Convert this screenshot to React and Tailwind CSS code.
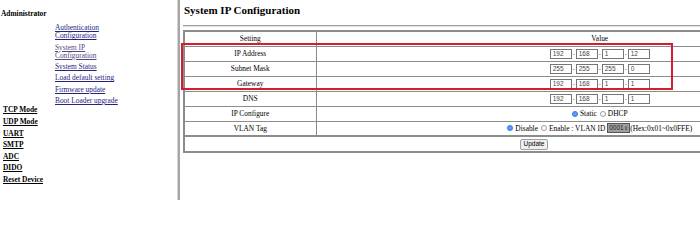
import { useState } from 'react'

const adminLinks = [
  { label: 'Authentication Configuration' },
  { label: 'System IP Configuration', visited: true },
  { label: 'System Status' },
  { label: 'Load default setting' },
  { label: 'Firmware update' },
  { label: 'Boot Loader upgrade' },
]

const sections = ['TCP Mode', 'UDP Mode', 'UART', 'SMTP', 'ADC', 'DIDO', 'Reset Device']

function IpInputs({ values }) {
  return (
    <div className="flex items-center justify-center">
      {values.map((v, i) => (
        <div key={i} className="flex items-center">
          {i > 0 && <span className="w-[4px] text-center text-[7px] leading-none">.</span>}
          <input
            defaultValue={v}
            className="w-[22px] h-[10px] border border-[#767676] bg-white px-[2px] text-[6.5px] text-[#444] leading-none font-['Liberation_Sans',sans-serif] outline-none"
          />
        </div>
      ))}
    </div>
  )
}

function Radio({ checked }) {
  return checked ? (
    <span className="inline-block w-[6px] h-[6px] rounded-full border-[1.5px] border-[#2f7fe6] bg-[#5a9cf0] mr-[2px]" />
  ) : (
    <span className="inline-block w-[6px] h-[6px] rounded-full border border-[#9a9a9a] bg-white mr-[2px]" />
  )
}

export default function App() {
  const [mode, setMode] = useState('static')
  const [vlan, setVlan] = useState('disable')

  const cell = 'border border-[#8c8c8c] h-[15px] p-0 text-center align-middle'

  return (
    <div className="flex w-[700px] h-[200px] bg-white overflow-hidden font-['Liberation_Serif',serif] text-black">
      {/* left menu frame */}
      <div className="w-[177px] shrink-0 pt-[8px] text-[7.4px]">
        <div className="pl-[1px] font-bold leading-[11px]">Administrator</div>
        <div className="pl-[55px] pt-[5px] w-[128px]">
          {adminLinks.map((l) => (
            <a
              key={l.label}
              href="#"
              className={`block underline leading-[8.3px] mb-[3px] ${
                l.visited ? 'text-[#54487e]' : 'text-[#24247e]'
              }`}
            >
              {l.label}
            </a>
          ))}
        </div>
        <div className="pl-[3px] -mt-[2px]">
          {sections.map((s) => (
            <a key={s} href="#" className="block font-bold underline leading-[8.3px] mb-[3.3px] text-black">
              {s}
            </a>
          ))}
        </div>
      </div>

      {/* frame border */}
      <div className="w-[3px] shrink-0 border-l border-[#d4d4d4] bg-[#a6a6a6]" />

      {/* content frame */}
      <div className="relative flex-1 overflow-hidden pl-[3px] pt-[3px]">
        <h2 className="pl-[1px] text-[11px] font-bold leading-[14px]">System IP Configuration</h2>
        <hr className="mt-[8px] border-t border-[#a0a0a0] border-b-[#e0e0e0] border-b" />

        <table className="mt-[3px] w-[702px] border-collapse border-2 border-[#8c8c8c] text-[7.4px] leading-none">
          <tbody>
            <tr>
              <td className={`${cell} w-[132px]`}>Setting</td>
              <td className={cell}>Value</td>
            </tr>
            <tr>
              <td className={cell}>IP Address</td>
              <td className={cell}><IpInputs values={['192', '168', '1', '12']} /></td>
            </tr>
            <tr>
              <td className={cell}>Subnet Mask</td>
              <td className={cell}><IpInputs values={['255', '255', '255', '0']} /></td>
            </tr>
            <tr>
              <td className={cell}>Gateway</td>
              <td className={cell}><IpInputs values={['192', '168', '1', '1']} /></td>
            </tr>
            <tr>
              <td className={cell}>DNS</td>
              <td className={cell}><IpInputs values={['192', '168', '1', '1']} /></td>
            </tr>
            <tr>
              <td className={cell}>IP Configure</td>
              <td className={cell}>
                <div className="flex items-center justify-center">
                  <label className="flex items-center mr-[3px]" onClick={() => setMode('static')}>
                    <Radio checked={mode === 'static'} />
                    Static
                  </label>
                  <label className="flex items-center" onClick={() => setMode('dhcp')}>
                    <Radio checked={mode === 'dhcp'} />
                    DHCP
                  </label>
                </div>
              </td>
            </tr>
            <tr>
              <td className={`${cell} border-b-2`}>VLAN Tag</td>
              <td className={`${cell} border-b-2`}>
                <div className="flex items-center justify-center">
                  <label className="flex items-center mr-[3px]" onClick={() => setVlan('disable')}>
                    <Radio checked={vlan === 'disable'} />
                    Disable
                  </label>
                  <label className="flex items-center" onClick={() => setVlan('enable')}>
                    <Radio checked={vlan === 'enable'} />
                    Enable : VLAN ID
                  </label>
                  <span className="ml-[2px] flex items-center h-[10px] w-[23px] border border-[#555] bg-[#a0a0a0] pl-[1px] text-[6.5px] text-[#222] font-['Liberation_Sans',sans-serif]">
                    0001
                    <span className="ml-auto mr-[1px] text-[5px] leading-none">⇕</span>
                  </span>
                  <span>(Hex:0x01~0x0FFE)</span>
                </div>
              </td>
            </tr>
            <tr>
              <td colSpan={2} className="border border-[#8c8c8c] h-[16px] p-0 text-center align-middle">
                <button className="h-[11px] px-[3px] border border-[#a0a0a0] rounded-[2px] bg-[#efefef] text-[6.5px] leading-none font-['Liberation_Sans',sans-serif]">
                  Update
                </button>
              </td>
            </tr>
          </tbody>
        </table>

        {/* highlight around the address rows */}
        <div className="absolute left-[1px] top-[43px] w-[492px] h-[47px] border-[2.5px] border-[#d21f2f] pointer-events-none" />
      </div>
    </div>
  )
}
